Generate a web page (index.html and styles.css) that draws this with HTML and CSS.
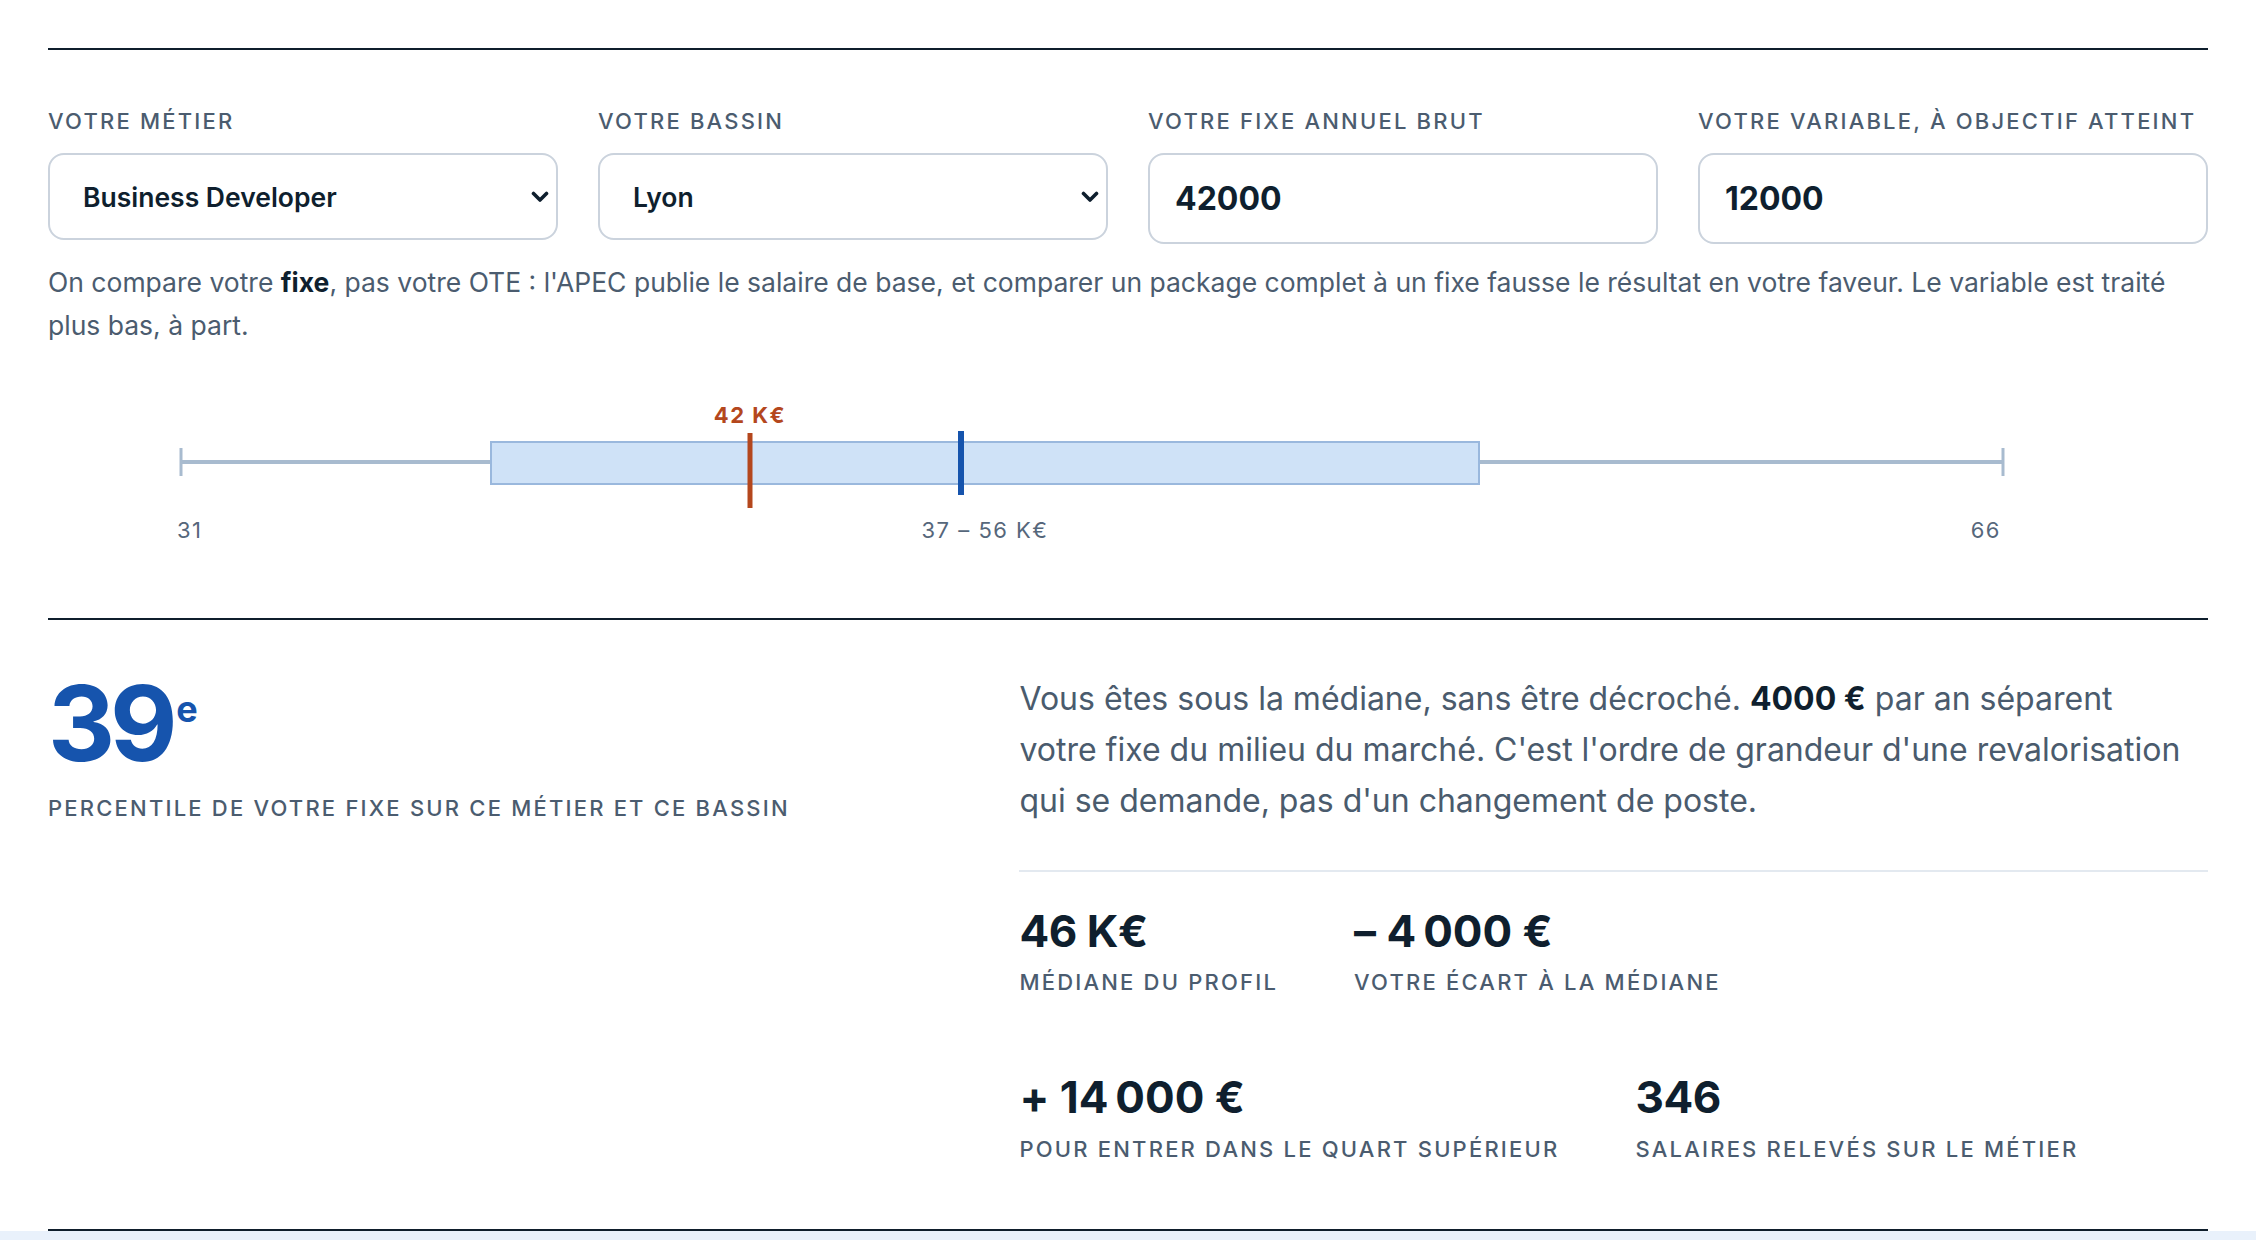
FILE: index.html
```html
<!DOCTYPE html>
<html lang="fr">
<head>
    <meta charset="UTF-8">
    <meta name="viewport" content="width=device-width, initial-scale=1.0">
    <title>Votre fixe face au marché</title>
    <link rel="stylesheet" href="styles.css">
</head>
<body>
    <main class="page">
        <section class="calc">
            <form class="fields">
                <div class="field">
                    <label for="metier">Votre métier</label>
                    <div class="select-wrap">
                        <select id="metier" name="metier">
                            <option selected>Business Developer</option>
                            <option>Account Executive</option>
                            <option>Key Account Manager</option>
                            <option>Sales Manager</option>
                        </select>
                        <svg class="chevron" viewBox="0 0 18 12" aria-hidden="true"><path d="M2.5 2.5 L9 9 L15.5 2.5"/></svg>
                    </div>
                </div>
                <div class="field">
                    <label for="bassin">Votre bassin</label>
                    <div class="select-wrap">
                        <select id="bassin" name="bassin">
                            <option>Paris</option>
                            <option selected>Lyon</option>
                            <option>Marseille</option>
                            <option>Lille</option>
                        </select>
                        <svg class="chevron" viewBox="0 0 18 12" aria-hidden="true"><path d="M2.5 2.5 L9 9 L15.5 2.5"/></svg>
                    </div>
                </div>
                <div class="field">
                    <label for="fixe">Votre fixe annuel brut</label>
                    <input type="text" id="fixe" name="fixe" value="42000" inputmode="numeric">
                </div>
                <div class="field">
                    <label for="variable">Votre variable, à objectif atteint</label>
                    <input type="text" id="variable" name="variable" value="12000" inputmode="numeric">
                </div>
            </form>

            <p class="note">On compare votre <strong>fixe</strong>, pas votre OTE : l'APEC publie le salaire de base, et comparer un package complet à un fixe fausse le résultat en votre faveur. Le variable est traité plus bas, à part.</p>

            <!-- scale: 31 -> x 132, 66 -> x 1956 (52.11 px par K€) -->
            <svg class="chart" viewBox="0 0 2160 180" role="img" aria-label="Distribution des salaires">
                <line class="whisker" x1="132" y1="82" x2="443" y2="82"/>
                <line class="whisker" x1="1431" y1="82" x2="1956" y2="82"/>
                <line class="cap" x1="133" y1="68" x2="133" y2="96"/>
                <line class="cap" x1="1955" y1="68" x2="1955" y2="96"/>
                <rect class="box" x="443" y="62" width="988" height="42"/>
                <line class="median" x1="913" y1="51" x2="913" y2="115"/>
                <line class="you" x1="702" y1="53" x2="702" y2="128"/>
                <text class="you-label" x="702" y="43" text-anchor="middle">42 K€</text>
                <text class="axis" x="129" y="158">31</text>
                <text class="axis" x="937" y="158" text-anchor="middle">37 – 56 K€</text>
                <text class="axis" x="1953" y="158" text-anchor="end">66</text>
            </svg>
        </section>

        <section class="results">
            <div class="rank">
                <div class="rank-value">39<sup>e</sup></div>
                <div class="label">Percentile de votre fixe sur ce métier et ce bassin</div>
            </div>
            <div class="verdict">
                <p>Vous êtes sous la médiane, sans être décroché. <strong>4000 €</strong> par an séparent votre fixe du milieu du marché. C'est l'ordre de grandeur d'une revalorisation qui se demande, pas d'un changement de poste.</p>
                <div class="stats">
                    <div class="stat">
                        <div class="stat-value">46 K€</div>
                        <div class="label">Médiane du profil</div>
                    </div>
                    <div class="stat">
                        <div class="stat-value">– 4&#8239;000 €</div>
                        <div class="label">Votre écart à la médiane</div>
                    </div>
                    <div class="stat">
                        <div class="stat-value">+ 14&#8239;000 €</div>
                        <div class="label">Pour entrer dans le quart supérieur</div>
                    </div>
                    <div class="stat">
                        <div class="stat-value">346</div>
                        <div class="label">Salaires relevés sur le métier</div>
                    </div>
                </div>
            </div>
        </section>
    </main>
    <div class="next"></div>
</body>
</html>
```

FILE: styles.css
```css
body {
    margin: 0;
    background: #fff;
    color: #0f1f2e;
    font-family: Inter, "Noto Sans", sans-serif;
}
.page {
    padding: 48px 48px 0;
}
.calc {
    border-top: 2px solid #0f1e2c;
    padding-top: 57px;
}
.fields {
    display: grid;
    grid-template-columns: repeat(4, 1fr);
    column-gap: 40px;
    align-items: start;
}
.field {
    display: flex;
    flex-direction: column;
    gap: 18px;
}
label, .label {
    font-size: 22px;
    line-height: 30px;
    font-weight: 500;
    letter-spacing: 0.1em;
    text-transform: uppercase;
    color: #4b5c6f;
}
label {
    line-height: 28px;
}
.select-wrap {
    position: relative;
}
select {
    appearance: none;
    -webkit-appearance: none;
    width: 100%;
    height: 87px;
    padding: 0 60px 0 33px;
    border: 2px solid #cbd3dd;
    border-radius: 16px;
    background: #fff;
    font-family: inherit;
    font-size: 26.5px;
    font-weight: 600;
    color: #0f1f2e;
    outline: none;
}
.chevron {
    position: absolute;
    right: 9px;
    top: 38px;
    width: 18px;
    height: 12px;
    fill: none;
    stroke: #0f1f2e;
    stroke-width: 3.6;
    stroke-linecap: round;
    stroke-linejoin: round;
    pointer-events: none;
}
input[type="text"] {
    box-sizing: border-box;
    width: 100%;
    height: 91px;
    padding: 0 25px;
    border: 2px solid #cbd3dd;
    border-radius: 16px;
    font-family: inherit;
    font-size: 32px;
    font-weight: 700;
    color: #0f1f2e;
    outline: none;
}
.note {
    margin: 17px 0 0;
    font-size: 26.5px;
    line-height: 43px;
    color: #4b5c6f;
}
.note strong {
    color: #0f1f2e;
    font-weight: 700;
}
.chart {
    display: block;
    width: 100%;
    height: auto;
    margin: 33px 0 58px;
}
.whisker {
    stroke: #a8bbcf;
    stroke-width: 4;
}
.cap {
    stroke: #a8bbcf;
    stroke-width: 3;
}
.box {
    fill: #cfe2f7;
    stroke: #9ab8dd;
    stroke-width: 2;
}
.median {
    stroke: #1654ad;
    stroke-width: 6;
}
.you {
    stroke: #b4471d;
    stroke-width: 5;
}
.you-label {
    fill: #b4471d;
    font-family: Inter, sans-serif;
    font-size: 22px;
    font-weight: 700;
    letter-spacing: 1.5px;
}
.axis {
    fill: #56677b;
    font-family: Inter, sans-serif;
    font-size: 22px;
    letter-spacing: 1.5px;
}
.results {
    display: grid;
    grid-template-columns: 3fr 4fr;
    column-gap: 80px;
    padding: 51px 0 65px;
    border-top: 2px solid #0f1e2c;
    border-bottom: 2px solid #0f1e2c;
}
.rank-value {
    font-size: 104px;
    line-height: 1;
    font-weight: 700;
    letter-spacing: -0.05em;
    color: #1654ad;
}
.rank-value sup {
    font-size: 36px;
    line-height: 1;
    vertical-align: 39px;
    letter-spacing: 0;
    margin-left: 4px;
}
.rank .label {
    margin-top: 18px;
}
.verdict p {
    max-width: 1176px;
    margin: 2px 0 0;
    font-size: 32px;
    line-height: 51px;
    color: #4a5b6d;
}
.verdict strong {
    color: #0f1f2e;
    font-weight: 700;
}
.stats {
    display: flex;
    flex-wrap: wrap;
    gap: 76px 76px;
    margin-top: 44px;
    padding-top: 35px;
    border-top: 2px solid #e3e9f0;
}
.stat-value {
    font-size: 44px;
    line-height: 1.1;
    font-weight: 700;
    letter-spacing: -0.01em;
    color: #0f1f2e;
}
.stat .label {
    margin-top: 12px;
}
.next {
    height: 40px;
    background: #e9f1fb;
}
```
